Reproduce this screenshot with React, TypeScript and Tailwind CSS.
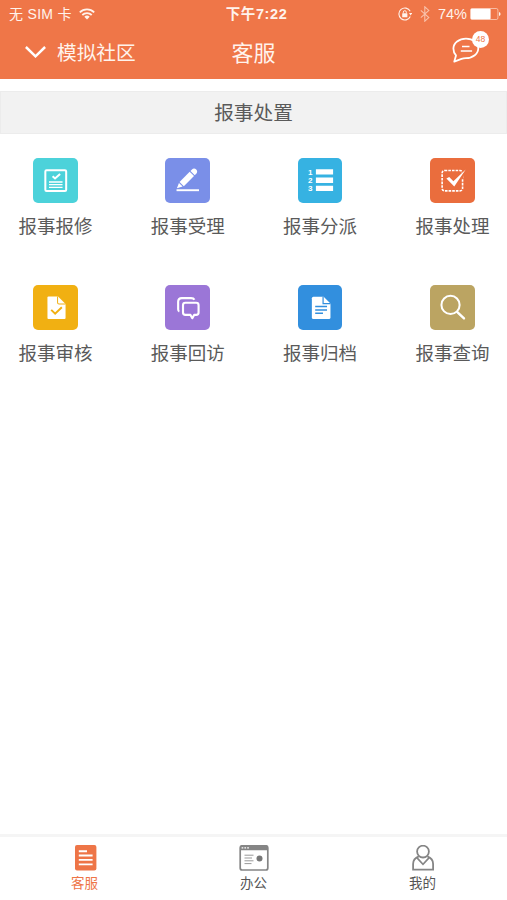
import type { ReactNode } from "react";

// Glyphs are drawn on the same 44x44 grid as the coloured tile behind them.

const tiles: { label: string; color: string; glyph: ReactNode }[] = [
  {
    label: "报事报修",
    color: "bg-[#4cd2da]",
    glyph: (
      <g fill="none" stroke="#fff">
        <rect x="12.2" y="12.2" width="20.6" height="20.4" rx="1.2" strokeWidth="2" />
        <path d="M19.4 18l2.4 2.2 5-4.4" strokeWidth="2" />
        <path d="M15.8 23.7h13.4M15.8 26.4h13.4M15.8 29h13.4" strokeWidth="1.3" />
      </g>
    ),
  },
  {
    label: "报事受理",
    color: "bg-[#7a8fe8]",
    glyph: (
      <g fill="#fff">
        <path d="M11.8 30l2-5.4 3.6 3.5z" />
        <path d="M14.4 23.7L24.4 13.6l4.3 4.3-10.1 10z" />
        <path d="M25.2 12.8l1.5-1.5c1.2-1.2 3-1.1 4.2.1s1.2 2.9 0 4.1l-1.5 1.5z" />
        <path d="M11.4 30.9h22.2v1.9H11.4z" />
      </g>
    ),
  },
  {
    label: "报事分派",
    color: "bg-[#36b2e2]",
    glyph: (
      <g fill="#fff">
        <path d="M17.7 11.2h17v5.2h-17zM17.7 19.4h17v5.2h-17zM17.7 27.5h17v5.2h-17z" />
        <g className="font-['Liberation_Sans'] text-[8px] font-bold" textAnchor="middle">
          <text x="12.2" y="16.5">1</text>
          <text x="12.2" y="24.8">2</text>
          <text x="12.2" y="33">3</text>
        </g>
      </g>
    ),
  },
  {
    label: "报事处理",
    color: "bg-[#ea6d3d]",
    glyph: (
      <g>
        <rect x="12" y="12.3" width="20.2" height="20.2" rx="2.5" fill="none" stroke="#fff" strokeWidth="1.6" strokeDasharray="2.6 1" />
        <path d="M28.5 17.5L35 11l-2.5 10z" fill="#ea6d3d" />
        <path d="M16.2 20.2l2.8-1.5 4.1 4.2L35.3 11.3 24 28.3z" fill="#fff" />
      </g>
    ),
  },
  {
    label: "报事审核",
    color: "bg-[#f1b012]",
    glyph: (
      <g>
        <path d="M15.3 11.4h9.5l7.4 7.4v13.9a1 1 0 0 1-1 1H15.3a1 1 0 0 1-1-1V12.4a1 1 0 0 1 1-1z" fill="#fff" />
        <path d="M24.3 11.4v5.9q0 1.4 1.4 1.4h6.5" fill="none" stroke="#f1b012" strokeWidth="1" />
        <path d="M18 24.6l3.9 3.8 6.6-6.4" fill="none" stroke="#f1b012" strokeWidth="1.9" />
      </g>
    ),
  },
  {
    label: "报事回访",
    color: "bg-[#9b76d7]",
    glyph: (
      <g fill="none" stroke="#fff" strokeWidth="2.1" strokeLinejoin="round">
        <path d="M14.2 26.2c-1-.3-1.2-1.1-1.2-2.3v-7.3q0-3.6 3.6-3.6h9.2q2.5 0 3.3 1.5" />
        <path d="M20.2 17.5h10.6q2.4 0 2.4 2.4v7.3q0 2.4-2.4 2.4h-2L27 32.8l-1.8-3.2h-5q-2.4 0-2.4-2.4v-7.3q0-2.4 2.4-2.4z" />
      </g>
    ),
  },
  {
    label: "报事归档",
    color: "bg-[#328fde]",
    glyph: (
      <g>
        <path d="M15.2 11.5h10.2l6.7 6.7v14a1.5 1.5 0 0 1-1.5 1.5H15.2a1.5 1.5 0 0 1-1.5-1.5V13a1.5 1.5 0 0 1 1.5-1.5z" fill="#fff" />
        <path d="M24.8 11.5v6.9h7.3" fill="none" stroke="#328fde" strokeWidth="1.2" />
        <path d="M17 21.3h11.7M17 24.7h11.7M17 28h7.7" fill="none" stroke="#328fde" strokeWidth="1.4" />
      </g>
    ),
  },
  {
    label: "报事查询",
    color: "bg-[#bba462]",
    glyph: (
      <g fill="none" stroke="#fff" strokeWidth="2" strokeLinecap="round">
        <circle cx="20.3" cy="19.7" r="9" />
        <path d="M27 26.8l6.6 6.3" strokeWidth="2.4" />
      </g>
    ),
  },
];

const tabs: { label: string; active?: boolean; icon: ReactNode }[] = [
  {
    label: "客服",
    active: true,
    icon: (
      <svg className="h-[26px] w-[30px]" viewBox="0 0 30 26">
        <rect x="5" y="0" width="21.4" height="25.6" rx="2" fill="#ee7547" />
        <path d="M8.8 6.3h8.2M8.8 10.5h13.8M8.8 14.9h13.8M8.8 19.4h13.8" stroke="#fff" strokeWidth="1.9" />
      </svg>
    ),
  },
  {
    label: "办公",
    icon: (
      <svg className="h-[26px] w-[30px]" viewBox="0 0 30 26">
        <rect x="1.2" y=".8" width="27.6" height="24.2" rx="2" fill="none" stroke="#858585" strokeWidth="1.7" />
        <path d="M1 5.3V2.4Q1 .5 3 .5h24q2 0 2 1.9v2.9z" fill="#858585" />
        <path d="M2.6 2.8h1.7M5.4 2.8h1.7M8.2 2.8h1.7" stroke="#fff" strokeWidth="1.2" />
        <path d="M5.5 10.2h9M5.5 13h7.5M5.5 15.8h9M5.5 18.6h7" stroke="#999" strokeWidth="1" />
        <circle cx="20.5" cy="13.4" r="3" fill="#777" />
      </svg>
    ),
  },
  {
    label: "我的",
    icon: (
      <svg className="h-[26px] w-[30px]" viewBox="0 0 30 26" fill="none" stroke="#858585" strokeWidth="1.8">
        <circle cx="15" cy="6.6" r="5.9" />
        <path d="M10.8 11.3c-3.7 1.4-5.7 4.2-5.7 7.6v5.7h20v-5.7c0-3.4-2-6.200-5.700-7.600" />
        <path d="M8.800 12.600L15 19.400l6.200-6.800" strokeWidth="1.600" />
      </svg>
    ),
  },
];

function StatusBar() {
  return (
    <div className="flex h-7 items-center justify-between pl-[9px] pr-[6px] text-[14px] leading-none text-[#fff3ec]">
      <div className="flex w-[180px] items-center gap-[7px]">
        <span className="whitespace-nowrap tracking-[0.3px]">无 SIM 卡</span>
        <svg className="h-3 w-4" viewBox="0 0 16 12" fill="none" stroke="currentColor" strokeWidth="1.8">
          <path d="M.8 4.3a10.3 10.3 0 0 1 14.4 0M3.3 7a6.7 6.7 0 0 1 9.4 0" />
          <path d="M5.3 8.8a3.8 3.8 0 0 1 5.4 0L8 11.6z" fill="currentColor" stroke="none" />
        </svg>
      </div>
      <span className="ml-[3px] whitespace-nowrap text-[14.5px] font-bold tracking-[0.6px]">下午7:22</span>
      <div className="flex w-[180px] items-center justify-end">
        <svg className="mr-2 h-[14px] w-[14px]" viewBox="0 0 14 14">
          <path d="M12.2 4.2A6 6 0 1 0 12.3 9.6" fill="none" stroke="currentColor" strokeWidth="1.1" />
          <path d="M11 6h3.2l-1.6 2.5z" fill="currentColor" />
          <rect x="4.2" y="6.3" width="5.2" height="3.9" rx=".5" fill="currentColor" />
          <path d="M5.3 6.3V5.2a1.5 1.5 0 0 1 3 0v1.1" fill="none" stroke="currentColor" strokeWidth="1" />
        </svg>
        <svg className="mr-2 h-4 w-[10px] opacity-60" viewBox="0 0 10 16" fill="none" stroke="currentColor" strokeWidth="1.1">
          <path d="M.8 4.4l8 7.2-4 3.6V.8l4 3.6-8 7.2" />
        </svg>
        <span className="mr-[3px] text-[14.5px]">74%</span>
        <svg className="h-3 w-[31px]" viewBox="0 0 31 12">
          <rect x=".5" y=".5" width="27.4" height="11" rx="1.5" fill="none" stroke="currentColor" strokeWidth=".8" opacity=".7" />
          <rect x=".8" y=".8" width="19.8" height="10.4" rx="1" fill="#fff" />
          <path d="M29 3.9q1.6.6 1.6 2.1T29 8.1z" fill="currentColor" />
        </svg>
      </div>
    </div>
  );
}

function NavBar() {
  return (
    <div className="flex h-[51px] items-center justify-between pl-[25px] pr-[18px] text-[#fff3ec]">
      <div className="flex w-[170px] items-center gap-[11px]">
        <svg className="-mt-0.5 h-3 w-[21px]" viewBox="0 0 21 12" fill="none" stroke="#fff" strokeWidth="2.5">
          <path d="M.9 1l9.6 9.3L20.1 1" />
        </svg>
        <span className="text-[19.7px] leading-none">模拟社区</span>
      </div>
      <h1 className="text-[22px] leading-none">客服</h1>
      <div className="flex w-[177px] justify-end">
        <div className="relative -mt-[13px] h-[32px] w-[37px]">
          <svg className="absolute bottom-0 left-0 h-[26px] w-[28px]" viewBox="0 0 28 26" fill="none" stroke="#fff" strokeWidth="1.8" strokeLinejoin="round">
            <path d="M14 1.6c7 0 12.3 4.2 12.3 9.7S21 21.2 14 21.2c-1.7 0-3.1.2-4.5.7L2.3 24.6l1.700-6.200C2.200 16.500 1.400 14.200 1.400 11.500 1.400 5.900 7 1.600 14 1.600z" />
            <path d="M10 9.4h7.5M8.8 14.1h11.3" strokeWidth="1.5" />
          </svg>
          <span className="absolute right-0 top-0 flex h-[17px] w-[17px] items-center justify-center rounded-full bg-white font-['Liberation_Sans'] text-[8.5px] leading-none text-[#ee7547]">
            48
          </span>
        </div>
      </div>
    </div>
  );
}

export default function App() {
  return (
    <div className="flex h-[900px] w-[507px] flex-col bg-white font-['Liberation_Sans','Noto_Sans_CJK_SC',sans-serif]">
      <header className="h-[79px] bg-[#ef7648]">
        <StatusBar />
        <NavBar />
      </header>

      <main className="flex-1">
        <h2 className="mt-3 flex h-[43px] items-center justify-center border border-[#ececec] bg-[#f2f2f2] pt-0.5 text-[19.7px] leading-none text-[#5a5a5a]">
          报事处置
        </h2>
        <div className="mt-6 grid grid-cols-[repeat(4,74px)] justify-between gap-y-[39px] pl-[18.4px] pr-[17.6px]">
          {tiles.map((t) => (
            <div key={t.label} className="flex h-[88px] flex-col items-center">
              <div className={`h-[44.5px] w-[44.5px] rounded-[5px] ${t.color}`}>
                <svg className="h-full w-full" viewBox="0 0 44 44">
                  {t.glyph}
                </svg>
              </div>
              <span className="mt-[14px] whitespace-nowrap text-[18.5px] leading-[19px] text-[#5a5a5a]">{t.label}</span>
            </div>
          ))}
        </div>
      </main>

      <footer className="grid h-[66px] grid-cols-3 border-t-[3px] border-[#f5f5f5] bg-white">
        {tabs.map((t) => (
          <div key={t.label} className="flex flex-col items-center pt-2">
            {t.icon}
            <span className={`mt-1.5 text-[13.5px] leading-[14px] ${t.active ? "text-[#ee7547]" : "text-[#555]"}`}>
              {t.label}
            </span>
          </div>
        ))}
      </footer>
    </div>
  );
}
